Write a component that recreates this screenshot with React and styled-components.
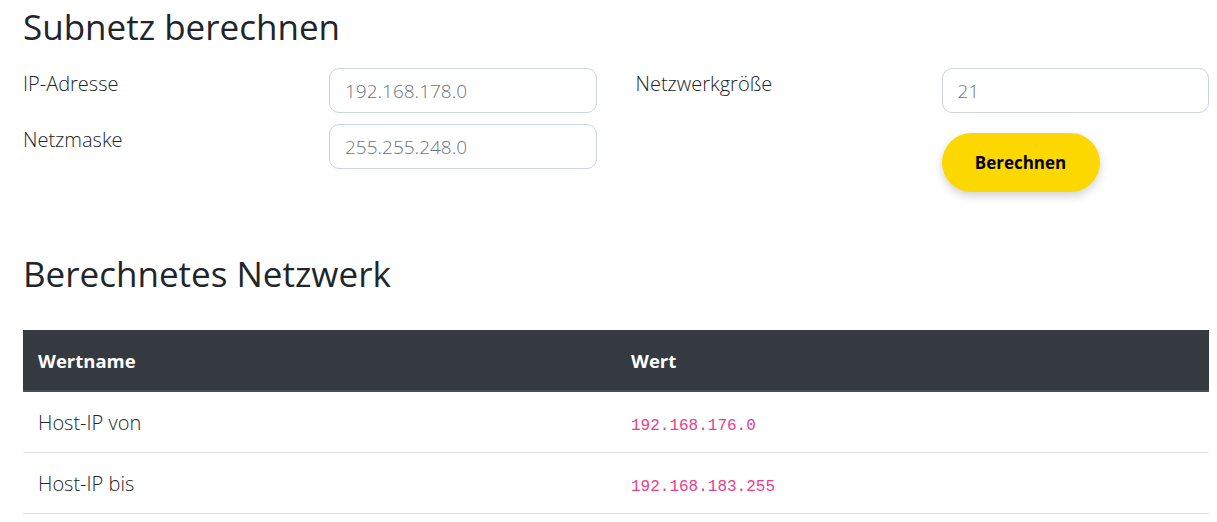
import React from 'react'
import styled, { createGlobalStyle } from 'styled-components'

const GlobalStyle = createGlobalStyle`
  body {
    margin: 0;
    background: #fff;
    font-family: "Open Sans", "Noto Sans", sans-serif;
    font-weight: 300;
    color: #212529;
  }
`;

const Page = styled.div`
  padding: 0 8px 0 23px;
`;

const Title = styled.h2`
  margin: 0;
  font-size: 35px;
  font-weight: 400;
  line-height: 1.2;
  padding-top: ${p => p.top}px;
  padding-bottom: ${p => p.bottom}px;
`;

const FormGrid = styled.form`
  display: grid;
  grid-template-columns: minmax(0, 1fr) minmax(0, 1fr);
  column-gap: 39px;
`;

const Column = styled.div`
  display: flex;
  flex-direction: column;
  gap: 11px;
`;

const Row = styled.div`
  display: grid;
  grid-template-columns: 306px minmax(0, 1fr);
  align-items: start;
`;

const Label = styled.label`
  font-size: 20px;
  padding-top: 2px;
`;

const Input = styled.input`
  width: 100%;
  height: 45px;
  box-sizing: border-box;
  border: 1px solid #ced4da;
  border-radius: 10px;
  padding: 0 15px;
  font-family: inherit;
  font-weight: 300;
  font-size: 19px;
  color: #495057;
  &::placeholder { color: #6c757d; }
`;

const Button = styled.button`
  width: 158px;
  height: 59px;
  border: none;
  border-radius: 30px;
  background: #fdd800;
  font-family: inherit;
  font-size: 17px;
  font-weight: 700;
  color: #000;
  box-shadow: 0 4px 10px rgba(0, 0, 0, 0.18);
  margin-top: 9px;
`;

const Table = styled.table`
  width: 100%;
  border-collapse: collapse;
  font-size: 20px;
`;

const Th = styled.th`
  background: #343a40;
  color: #fff;
  text-align: left;
  font-size: 18.5px;
  font-weight: 700;
  height: 60px;
  padding: 0 15px;
  border-bottom: 2px solid #454d55;
  width: 50%;
`;

const Td = styled.td`
  height: 60px;
  padding: 0 15px;
  border-bottom: 1px solid #dee2e6;
`;

const Code = styled.code`
  font-family: "Liberation Mono", "DejaVu Sans Mono", monospace;
  font-size: 16px;
  font-weight: 400;
  color: #e83e8c;
`;

const rows = [
  ['Host-IP von', '192.168.176.0'],
  ['Host-IP bis', '192.168.183.255'],
];

const App = () => {
  const submitHandler = (e) => e.preventDefault();
  return (
    <Page>
      <GlobalStyle />
      <Title top={6} bottom={20}>Subnetz berechnen</Title>
      <FormGrid onSubmit={submitHandler}>
        <Column>
          <Row>
            <Label>IP-Adresse</Label>
            <Input placeholder="192.168.178.0" />
          </Row>
          <Row>
            <Label>Netzmaske</Label>
            <Input placeholder="255.255.248.0" />
          </Row>
        </Column>
        <Column>
          <Row>
            <Label>Netzwerkgröße</Label>
            <Input placeholder="21" />
          </Row>
          <Row>
            <span />
            <div>
              <Button type="submit">Berechnen</Button>
            </div>
          </Row>
        </Column>
      </FormGrid>
      <Title top={61} bottom={35}>Berechnetes Netzwerk</Title>
      <Table>
        <thead>
          <tr>
            <Th>Wertname</Th>
            <Th>Wert</Th>
          </tr>
        </thead>
        <tbody>
          {rows.map(([name, value]) => (
            <tr key={name}>
              <Td>{name}</Td>
              <Td><Code>{value}</Code></Td>
            </tr>
          ))}
        </tbody>
      </Table>
    </Page>
  )
}

export default App
